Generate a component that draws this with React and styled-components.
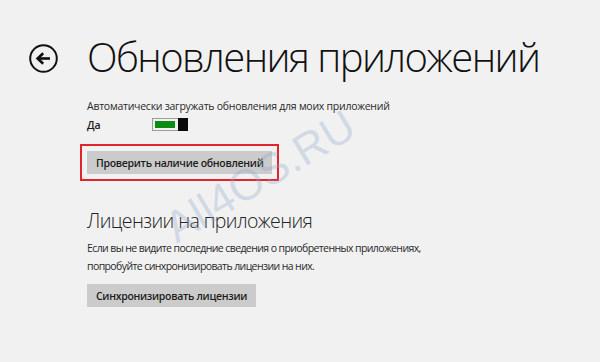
import React from "react";
import styled, { createGlobalStyle } from "styled-components";

const Global = createGlobalStyle`
  html, body { margin: 0; padding: 0; background: #f1f1f1; }
  body { font-family: "Open Sans", "Noto Sans", sans-serif; color: #222; }
`;

const Page = styled.div`
  position: relative;
  width: 600px;
  height: 362px;
  overflow: hidden;
  background: #f1f1f1;
  box-sizing: border-box;
  padding-top: 33px;
`;

const Header = styled.div`
  display: flex;
  align-items: center;
  padding-left: 29px;
  height: 50px;
`;

const BackButton = styled.div`
  width: 29px;
  height: 29px;
  flex: none;
  display: flex;
  align-items: center;
  justify-content: center;
`;

const Title = styled.h1`
  margin: -3px 0 0 29px;
  font-family: "Open Sans", "Noto Sans", sans-serif;
  font-weight: 300;
  font-size: 40px;
  line-height: 50px;
  color: #111;
  letter-spacing: -1.6px;
  white-space: nowrap;
`;

const Content = styled.div`
  padding-left: 87px;
  display: flex;
  flex-direction: column;
`;

const SmallText = styled.p`
  margin: ${(p) => p.$mt || 0}px 0 0;
  font-size: 10.5px;
  letter-spacing: ${(p) => p.$ls ?? -0.25}px;
  line-height: ${(p) => p.$lh || 19}px;
  color: #2a2a2a;
  white-space: nowrap;
`;

const ToggleRow = styled.div`
  display: flex;
  align-items: center;
  height: 17px;
`;

const ToggleLabel = styled.span`
  width: 65px;
  font-size: 10.5px;
  font-weight: 600;
  color: #1a1a1a;
`;

const Track = styled.div`
  position: relative;
  width: 36px;
  height: 13px;
  box-sizing: border-box;
  border: 1px solid #9c9c9c;
  padding: 2px 12px 2px 2px;
`;

const Fill = styled.div`
  width: 100%;
  height: 100%;
  background: #0b8c12;
`;

const Thumb = styled.div`
  position: absolute;
  right: -1px;
  top: -1px;
  width: 10px;
  height: 13px;
  background: #0a0a0a;
`;

const Highlight = styled.div`
  align-self: flex-start;
  margin: ${(p) => p.$mt}px 0 0 -7px;
  border: 2px solid #e2242c;
  padding: 5px;
`;

const Button = styled.button`
  display: block;
  margin: ${(p) => p.$mt || 0}px 0 0;
  height: 23px;
  padding: 0 9px;
  border: none;
  background: #cbcbcb;
  font-family: "Open Sans", "Noto Sans", sans-serif;
  font-weight: 600;
  font-size: 10.5px;
  letter-spacing: -0.3px;
  color: #1c1c1c;
  align-self: flex-start;
  white-space: nowrap;
  cursor: default;
`;

const SectionTitle = styled.h2`
  margin: ${(p) => p.$mt}px 0 0;
  font-weight: 300;
  font-size: 19.5px;
  letter-spacing: -0.6px;
  line-height: 28px;
  color: #222;
  white-space: nowrap;
`;

const Watermark = styled.div`
  position: absolute;
  left: 180px;
  top: 206px;
  font-family: "Liberation Sans", Arial, sans-serif;
  font-size: 44px;
  line-height: 44px;
  color: rgba(140, 165, 200, 0.33);
  transform: rotate(-31deg);
  transform-origin: left bottom;
  white-space: nowrap;
  pointer-events: none;
`;

function BackIcon() {
  return (
    <svg width="29" height="29" viewBox="0 0 29 29">
      <circle cx="14.5" cy="14.5" r="13.3" fill="none" stroke="#111" strokeWidth="2" />
      <path d="M21 14.5 H9.5" stroke="#111" strokeWidth="2.6" fill="none" />
      <path d="M14.2 9.2 L8.6 14.5 L14.2 19.8" stroke="#111" strokeWidth="2.6" fill="none" strokeLinejoin="miter" />
    </svg>
  );
}

export default function App() {
  return (
    <>
      <Global />
      <Page>
        <Header>
          <BackButton>
            <BackIcon />
          </BackButton>
          <Title>Обновления приложений</Title>
        </Header>
        <Content>
          <SmallText $mt={14}>Автоматически загружать обновления для моих приложений</SmallText>
          <ToggleRow>
            <ToggleLabel>Да</ToggleLabel>
            <Track>
              <Fill />
              <Thumb />
            </Track>
          </ToggleRow>
          <Highlight $mt={11}>
            <Button>Проверить наличие обновлений</Button>
          </Highlight>
          <SectionTitle $mt={26}>Лицензии на приложения</SectionTitle>
          <SmallText $mt={4} $lh={18} $ls={-0.6}>
            Если вы не видите последние сведения о приобретенных приложениях,
            <br />
            попробуйте синхронизировать лицензии на них.
          </SmallText>
          <Button $mt={9}>Синхронизировать лицензии</Button>
        </Content>
        <Watermark>All4OS.RU</Watermark>
      </Page>
    </>
  );
}
